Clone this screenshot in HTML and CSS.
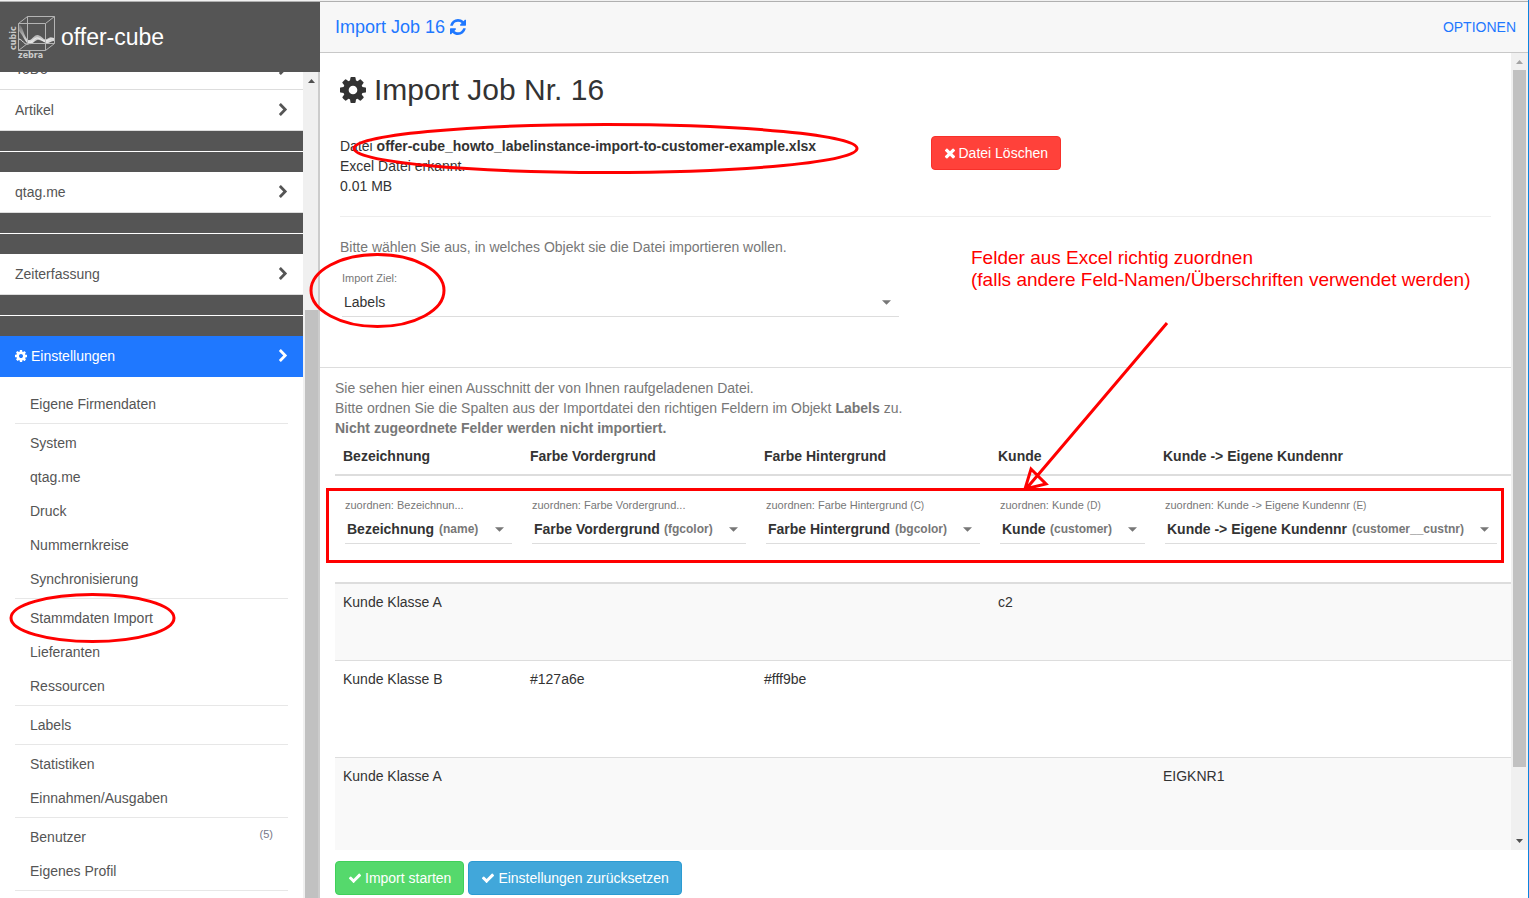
FILE: index.html
```html
<!DOCTYPE html>
<html lang="de">
<head>
<meta charset="utf-8">
<title>offer-cube – Import Job 16</title>
<link rel="stylesheet" href="styles.css">
</head>
<body>
<svg class="defs" width="0" height="0" aria-hidden="true">
  <symbol id="cog" viewBox="0 128 1536 1536"><path d="M1024 896q0-106-75-181t-181-75-181 75-75 181 75 181 181 75 181-75 75-181zm512-109v222q0 12-8 23t-20 13l-185 28q-19 54-39 91 35 50 107 138 10 12 10 25t-9 23q-27 37-99 108t-94 71q-12 0-26-9l-138-108q-44 23-91 38-16 136-29 186-7 28-36 28h-222q-14 0-24.5-8.5t-11.500-21.500l-28-184q-49-16-90-37l-141 107q-10 9-25 9-14 0-25-11-126-114-165-168-7-10-7-23 0-12 8-23 15-21 51-66.500t54-70.500q-27-50-41-99l-183-27q-13-2-21-12.500t-8-23.500v-222q0-12 8-23t19-13l186-28q14-46 39-92-40-57-107-138-10-12-10-24 0-10 9-23 26-36 98.500-107.500t94.500-71.500q13 0 26 10l138 107q44-23 91-38 16-136 29-186 7-28 36-28h222q14 0 24.500 8.500t11.500 21.500l28 184q49 16 90 37l142-107q9-9 24-9 13 0 25 10 129 119 165 170 7 8 7 22 0 12-8 23-15 21-51 66.500t-54 70.500q26 50 41 98l183 28q13 2 21 12.500t8 23.500z"/></symbol>
  <symbol id="refresh" viewBox="128 128 1536 1536"><path d="M1639 1056q0 5-1 7-64 268-268 434.500t-478 166.500q-146 0-282.500-55t-243.500-157l-129 129q-19 19-45 19t-45-19-19-45v-448q0-26 19-45t45-19h448q26 0 45 19t19 45-19 45l-137 137q71 66 161 102t187 36q134 0 250-65t186-179q11-17 53-117 8-23 30-23h192q13 0 22.500 9.500t9.500 22.500zm25-800v448q0 26-19 45t-45 19h-448q-26 0-45-19t-19-45 19-45l138-138q-148-137-349-137-134 0-250 65t-186 179q-11 17-53 117-8 23-30 23h-199q-13 0-22.500-9.500t-9.500-22.500v-7q65-268 270-434.500t480-166.500q146 0 284 55.500t245 156.500l130-129q19-19 45-19t45 19 19 45z"/></symbol>
  <symbol id="check" viewBox="0 0 1792 1792"><path d="M1671 566q0 40-28 68l-724 724-136 136q-28 28-68 28t-68-28l-136-136-362-362q-28-28-28-68t28-68l136-136q28-28 68-28t68 28l294 295 656-657q28-28 68-28t68 28l136 136q28 28 28 68z"/></symbol>
  <symbol id="times" viewBox="192 192 1408 1408"><path d="M1490 1322q0 40-28 68l-136 136q-28 28-68 28t-68-28l-294-294-294 294q-28 28-68 28t-68-28l-136-136q-28-28-28-68t28-68l294-294-294-294q-28-28-28-68t28-68l136-136q28-28 68-28t68 28l294 294 294-294q28-28 68-28t68 28l136 136q28 28 28 68t-28 68l-294 294 294 294q28 28 28 68z"/></symbol>
  <symbol id="chevron" viewBox="320 0 1088 1792"><path d="M1363 877l-742 742q-19 19-45 19t-45-19l-166-166q-19-19-19-45t19-45l531-531-531-531q-19-19-19-45t19-45l166-166q19-19 45-19t45 19l742 742q19 19 19 45t-19 45z"/></symbol>
</svg>

<div class="app">
  <aside class="sidebar">
    <header class="brand">
      <svg class="logo" viewBox="0 0 46 44" aria-hidden="true">
        <defs>
          <linearGradient id="fade" x1="0" y1="0" x2="0" y2="1"><stop offset="0" stop-color="#fff" stop-opacity=".1"/><stop offset="1" stop-color="#fff" stop-opacity=".9"/></linearGradient>
        </defs>
        <path d="M9 8c4 2 5 13 9 16 4 1 6-6 10-5s6 6 9 4 4-2 7-1v3c-3 0-5 3-8 2s-6-4-9-3-5 5-8 4-4-4-7-9l-3-4z" fill="url(#fade)"/>
        <path d="M9 23c4 1 5 6 9 5 3 0 6-7 10-6s5 4 8 3 4-3 8-2" fill="none" stroke="#eee" stroke-width="1"/>
        <path d="M8.500 7.500h27v27h-27zM8.500 7.500l9-7h27v27l-9 7M35.500 7.500l9-7M8.500 34.500l9-7h27M17.500.5v27" fill="none" stroke="#b4b4b4" stroke-width="1"/>
        <text x="8" y="42" class="logo-text">zebra</text>
        <text x="-34" y="6" transform="rotate(-90)" class="logo-text">cubic</text>
      </svg>
      <span class="brand-name">offer-cube</span>
    </header>
    <div class="side-body">
      <nav class="nav">
        <a class="nav-item" href="#">ToDo<svg class="chev"><use href="#chevron"/></svg></a>
        <a class="nav-item" href="#">Artikel<svg class="chev"><use href="#chevron"/></svg></a>
        <div class="divider"></div>
        <a class="nav-item" href="#">qtag.me<svg class="chev"><use href="#chevron"/></svg></a>
        <div class="divider"></div>
        <a class="nav-item" href="#">Zeiterfassung<svg class="chev"><use href="#chevron"/></svg></a>
        <div class="divider"></div>
        <a class="nav-item active" href="#"><svg class="nav-icon"><use href="#cog"/></svg>Einstellungen<svg class="chev"><use href="#chevron"/></svg></a>
        <div class="subnav">
          <a href="#">Eigene Firmendaten</a>
          <hr>
          <a href="#">System</a>
          <a href="#">qtag.me</a>
          <a href="#">Druck</a>
          <a href="#">Nummernkreise</a>
          <a href="#">Synchronisierung</a>
          <hr>
          <a href="#">Stammdaten Import</a>
          <a href="#">Lieferanten</a>
          <a href="#">Ressourcen</a>
          <hr>
          <a href="#">Labels</a>
          <hr>
          <a href="#">Statistiken</a>
          <a href="#">Einnahmen/Ausgaben</a>
          <hr>
          <a href="#">Benutzer<span class="count">(5)</span></a>
          <a href="#">Eigenes Profil</a>
          <hr>
        </div>
      </nav>
      <div class="scrollbar side-scroll"><svg class="arrow dark" viewBox="0 0 7 4"><path d="M0 4l3.500-4L7 4z"/></svg><div class="thumb"></div></div>
    </div>
  </aside>

  <main class="main">
    <header class="topbar">
      <a class="title" href="#">Import Job 16 <svg class="refresh"><use href="#refresh"/></svg></a>
      <a class="options" href="#">OPTIONEN</a>
    </header>
    <div class="scroller">
      <div class="content">
        <section class="job">
          <h1><svg class="h-icon"><use href="#cog"/></svg>Import Job Nr. 16</h1>
          <div class="columns file">
            <p>Datei <b>offer-cube_howto_labelinstance-import-to-customer-example.xlsx</b><br>Excel Datei erkannt.<br>0.01 MB</p>
            <div><button class="btn danger" type="button"><svg class="btn-icon small"><use href="#times"/></svg>Datei Löschen</button></div>
          </div>
          <hr class="rule">
          <div class="columns">
            <div>
              <p class="muted">Bitte wählen Sie aus, in welches Objekt sie die Datei importieren wollen.</p>
              <div class="field target">
                <label for="ziel">Import Ziel:</label>
                <div class="control"><select id="ziel"><option>Labels</option></select><svg class="caret" viewBox="0 0 10 5"><path d="M0 0h10L5 5z"/></svg></div>
              </div>
            </div>
          </div>
        </section>
        <section class="mapping">
          <p class="muted">Sie sehen hier einen Ausschnitt der von Ihnen raufgeladenen Datei.<br>Bitte ordnen Sie die Spalten aus der Importdatei den richtigen Feldern im Objekt <b>Labels</b> zu.<br><b>Nicht zugeordnete Felder werden nicht importiert.</b></p>
          <table>
            <colgroup><col class="c1"><col class="c2"><col class="c2"><col class="c3"><col></colgroup>
            <thead>
              <tr><th>Bezeichnung</th><th>Farbe Vordergrund</th><th>Farbe Hintergrund</th><th>Kunde</th><th>Kunde -&gt; Eigene Kundennr</th></tr>
              <tr class="assign">
                <td><div class="field"><label for="f1">zuordnen: Bezeichnun...</label><div class="control"><select id="f1"><option>Bezeichnung</option></select><small>(name)</small><svg class="caret" viewBox="0 0 10 5"><path d="M0 0h10L5 5z"/></svg></div></div></td>
                <td><div class="field"><label for="f2">zuordnen: Farbe Vordergrund...</label><div class="control"><select id="f2"><option>Farbe Vordergrund</option></select><small>(fgcolor)</small><svg class="caret" viewBox="0 0 10 5"><path d="M0 0h10L5 5z"/></svg></div></div></td>
                <td><div class="field"><label for="f3">zuordnen: Farbe Hintergrund <small>(C)</small></label><div class="control"><select id="f3"><option>Farbe Hintergrund</option></select><small>(bgcolor)</small><svg class="caret" viewBox="0 0 10 5"><path d="M0 0h10L5 5z"/></svg></div></div></td>
                <td><div class="field"><label for="f4">zuordnen: Kunde <small>(D)</small></label><div class="control"><select id="f4"><option>Kunde</option></select><small>(customer)</small><svg class="caret" viewBox="0 0 10 5"><path d="M0 0h10L5 5z"/></svg></div></div></td>
                <td><div class="field last"><label for="f5">zuordnen: Kunde -&gt; Eigene Kundennr <small>(E)</small></label><div class="control"><select id="f5"><option>Kunde -&gt; Eigene Kundennr</option></select><small>(customer__custnr)</small><svg class="caret" viewBox="0 0 10 5"><path d="M0 0h10L5 5z"/></svg></div></div></td>
              </tr>
            </thead>
            <tbody>
              <tr class="short"><td>Kunde Klasse A</td><td></td><td></td><td>c2</td><td></td></tr>
              <tr><td>Kunde Klasse B</td><td>#127a6e</td><td>#fff9be</td><td></td><td></td></tr>
              <tr><td>Kunde Klasse A</td><td></td><td></td><td></td><td>EIGKNR1</td></tr>
            </tbody>
          </table>
        </section>
      </div>
      <div class="scrollbar main-scroll"><svg class="arrow" viewBox="0 0 7 4"><path d="M0 4l3.500-4L7 4z"/></svg><div class="thumb"></div><svg class="arrow dark" viewBox="0 0 7 4"><path d="M0 0h7L3.500 4z"/></svg></div>
    </div>
    <footer class="actions">
      <button class="btn success" type="button"><svg class="btn-icon"><use href="#check"/></svg>Import starten</button>
      <button class="btn info" type="button"><svg class="btn-icon"><use href="#check"/></svg>Einstellungen zurücksetzen</button>
    </footer>
  </main>
</div>

<svg class="marks" width="1529" height="898" aria-hidden="true">
  <ellipse cx="605.500" cy="148.500" rx="251.500" ry="24"/>
  <ellipse cx="377.500" cy="290.500" rx="66.500" ry="36"/>
  <ellipse cx="92.500" cy="618" rx="81.500" ry="23.500"/>
  <path d="M327.500 489.500h1175v72h-1175zM1167 323L1026 489M1025 489l6-20 15 15z"/>
</svg>
<p class="note">Felder aus Excel richtig zuordnen<br>(falls andere Feld-Namen/Überschriften verwendet werden)</p>
</body>
</html>
```
FILE: styles.css
```css
* { box-sizing: border-box; }
body {
  margin: 0;
  font: 14px/20px "Liberation Sans", Arial, sans-serif;
  color: #333;
  background: #fff;
  position: relative;
}
p, h1 { margin: 0; }
a { text-decoration: none; color: inherit; }
svg { fill: currentColor; flex: none; }
.defs { position: absolute; }

.app {
  display: flex;
  height: 100vh;
  padding-top: 1px;
  border-right: 1px solid #0b84e0;
  background: #f1f1f1;
  overflow: hidden;
}

/* Sidebar */
.sidebar {
  width: 320px;
  flex: none;
  display: flex;
  flex-direction: column;
  background: #fff;
  border-top: 1px solid #b0b0b0;
}
.brand {
  height: 70px;
  flex: none;
  display: flex;
  align-items: center;
  gap: 5px;
  padding-left: 10px;
  background: #555;
  color: #fff;
}
.logo { width: 46px; height: 44px; margin-top: 2px; overflow: visible; }
.logo-text { font: bold 8px "DejaVu Sans", sans-serif; fill: #ccc; }
.brand-name { font-size: 23px; line-height: 30px; }
.side-body { flex: 1; min-height: 0; display: flex; overflow: hidden; }
.nav { flex: 1; margin-top: -23px; color: #555; }
.nav-item {
  display: flex;
  align-items: center;
  height: 41px;
  padding: 0 15px;
  background: #fff;
  border-bottom: 1px solid #ddd;
}
.nav-item.active { background: #1f78ff; color: #fff; border-color: #1f78ff; }
.nav-icon { width: 12px; height: 12px; margin-right: 4px; }
.chev { width: 10px; height: 14px; margin-left: auto; }
.divider { height: 41px; border: solid #555; border-width: 20px 0; background: #fff; }
.subnav { padding: 10px 15px 0; }
.subnav a { display: flex; justify-content: space-between; padding: 7px 15px; }
.subnav hr { margin: 2px 0; border: 0; height: 1px; background: #e7e7e7; }
.count { font-size: 11px; line-height: 14px; color: #778; }

.scrollbar {
  width: 17px;
  flex: none;
  display: flex;
  flex-direction: column;
  align-items: center;
  background: #f0f0f0;
}
.arrow { width: 7px; height: 4px; margin: 7px 0 6px; color: #a3a3a3; }
.arrow.dark { color: #505050; }
.thumb { width: 13px; background: #c1c1c1; }
.side-scroll { padding-left: 2px; border-right: 2px solid #ccc; }
.side-scroll .thumb { margin-top: 221px; flex: 1; }
.main-scroll .thumb { height: 697px; }
.main-scroll .arrow.dark { margin-top: auto; margin-bottom: 7px; }

/* Main area */
.main { flex: 1; min-width: 0; display: flex; flex-direction: column; background: #fff; border-top: 1px solid #b0b0b0; }
.topbar {
  height: 51px;
  flex: none;
  display: flex;
  align-items: center;
  justify-content: space-between;
  padding: 0 12px 0 15px;
  background: #f7f7f7;
  border-bottom: 1px solid #c8c8c8;
  color: #1f78ff;
}
.title { display: flex; align-items: center; gap: 5px; font-size: 18px; }
.refresh { width: 16px; height: 16px; }
.scroller { flex: 1; min-height: 0; display: flex; overflow: hidden; }
.content { flex: 1; min-width: 0; }
.job { padding: 17px 20px 50px; border-bottom: 1px solid #ddd; }
h1 { display: flex; align-items: center; gap: 8px; font-size: 30px; line-height: 40px; font-weight: 400; }
.h-icon { width: 26px; height: 26px; }
.columns { display: grid; grid-template-columns: 1fr 1fr; gap: 30px; }
.file { margin-top: 26px; }
.rule { margin: 20px 0; border: 0; height: 1px; background: #eee; }
.muted { color: #777; }

.btn {
  display: inline-flex;
  align-items: center;
  gap: 3px;
  height: 34px;
  padding: 0 12px;
  border: 1px solid;
  border-radius: 4px;
  font: inherit;
  color: #fff;
}
.btn-icon { width: 14px; height: 14px; }
.btn-icon.small { width: 12px; height: 12px; }
.danger { background: #ff413a; border-color: #f8302a; }
.success { background: #55d96c; border-color: #40d05a; }
.info { background: #41a7da; border-color: #2b9bd2; }

.field { margin: 0 2px; }
.field label { display: block; height: 14px; font-size: 11px; line-height: 14px; color: #777; white-space: nowrap; }
.field label small { font-size: 10px; }
.control { display: flex; align-items: center; height: 32px; padding: 3px 8px 0 2px; border-bottom: 1px solid #ddd; }
.control select { appearance: none; border: 0; padding: 0; background: none; font: inherit; color: #333; }
.control small { margin-left: 4px; font-size: 12px; font-weight: 700; color: #777; }
.caret { width: 9px; height: 5px; margin-left: auto; color: #777; }
.target { margin-top: 14px; }

.mapping { padding: 10px 0 0 15px; }
table { width: 100%; table-layout: fixed; border-collapse: collapse; }
.c1 { width: 187px; }
.c2 { width: 234px; }
.c3 { width: 165px; }
th, td { padding: 8px; text-align: left; vertical-align: top; }
th { border-bottom: 2px solid #ddd; }
.assign td { padding: 22px 8px 38px; border-bottom: 2px solid #ddd; }
.assign .last { margin-right: 6px; }
.assign select { font-weight: 700; }
tbody tr { height: 97px; border-bottom: 1px solid #ddd; }
tbody .short { height: 77px; }
tbody tr:nth-child(odd) { background: #f9f9f9; }

.actions { height: 48px; flex: none; display: flex; align-items: flex-start; gap: 4px; padding: 11px 15px 0; }

/* Annotations drawn over the page */
.marks { position: absolute; top: 0; left: 0; fill: none; stroke: #f00; stroke-width: 3; pointer-events: none; }
.note { position: absolute; left: 971px; top: 247px; font-size: 19px; line-height: 22px; color: #f00; white-space: nowrap; }
```
